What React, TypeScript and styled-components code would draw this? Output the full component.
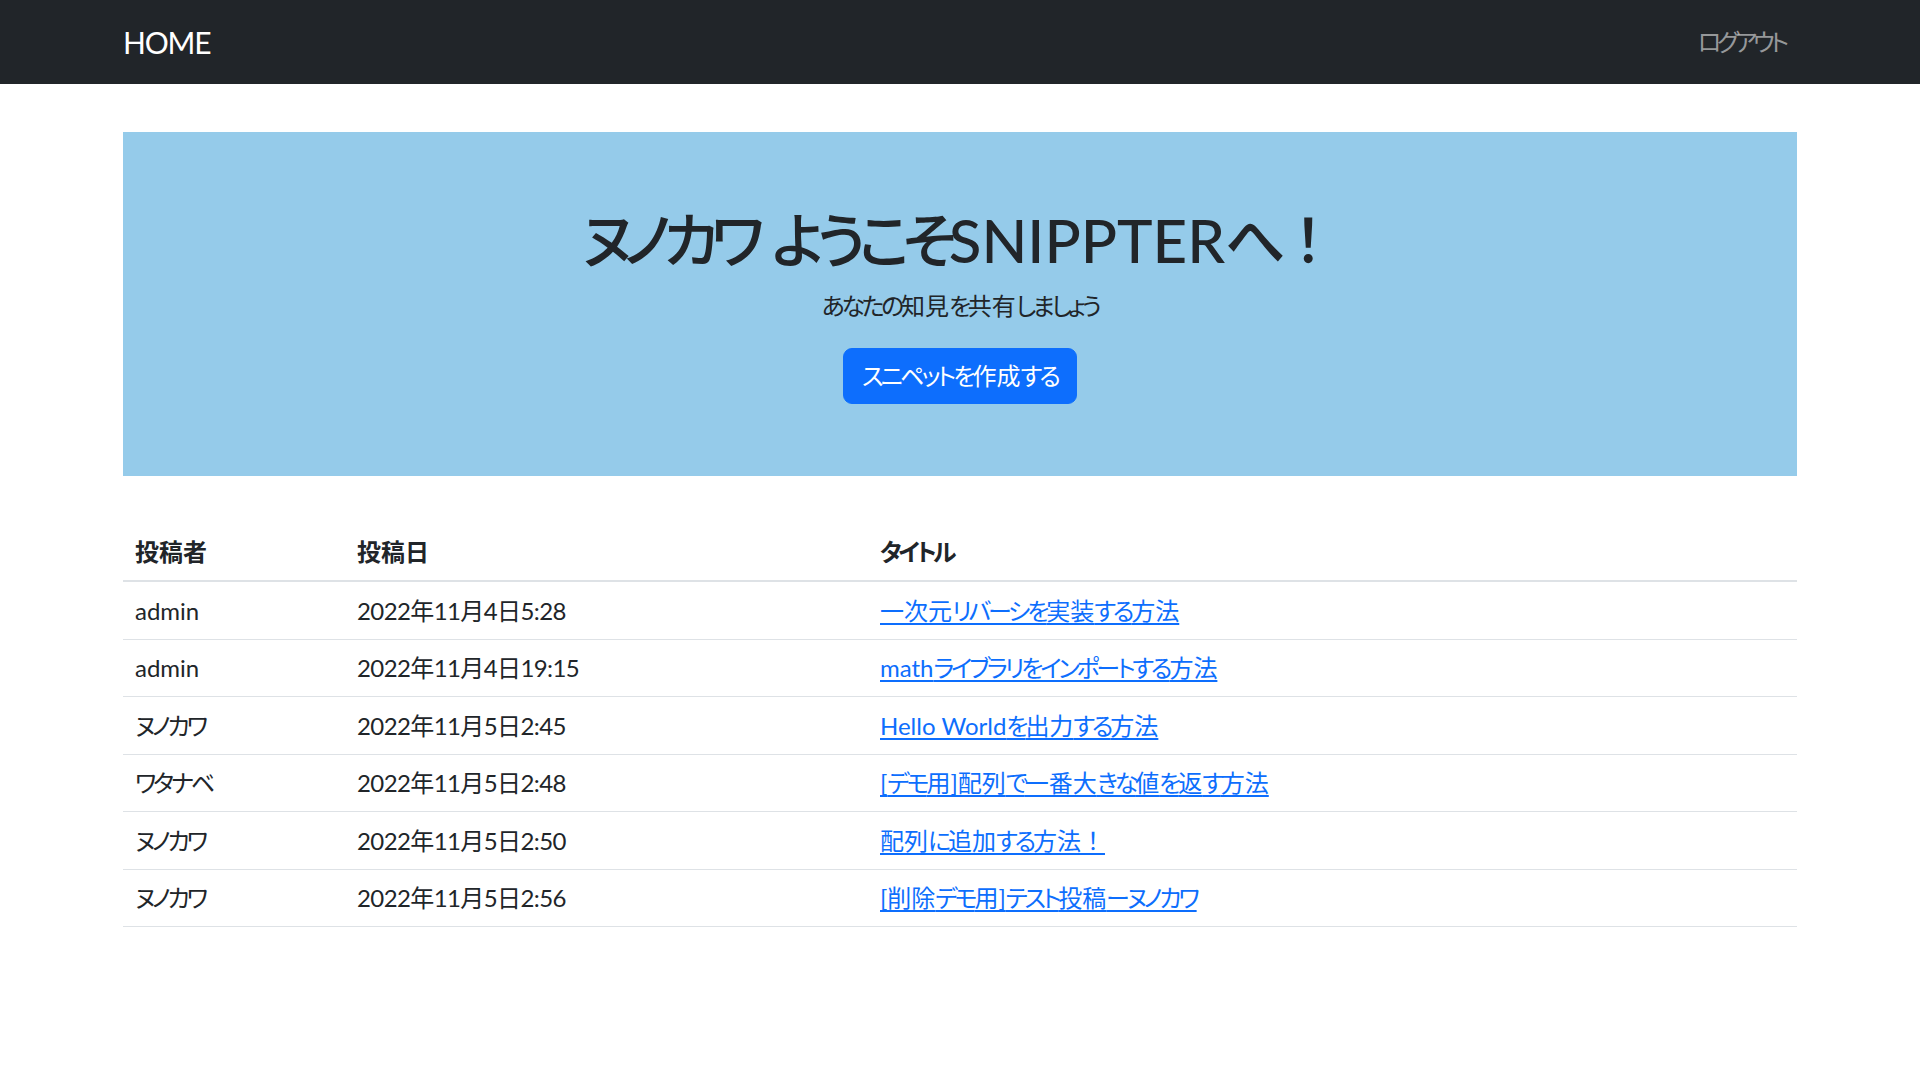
import React from "react";
import styled, { createGlobalStyle } from "styled-components";

const GlobalStyle = createGlobalStyle`
  * { box-sizing: border-box; }
  html, body { margin: 0; padding: 0; background: #ffffff; }
  body {
    font-family: Lato, "Noto Sans CJK JP", sans-serif;
    font-size: 24px;
    line-height: 1.5;
    color: #212529;
    font-feature-settings: "palt";
  }
`;

const Kana = styled.span<{ $tight?: number }>`
  letter-spacing: ${(p) => p.$tight ?? -0.125}em;
`;

const FullPunct = styled.span`
  font-feature-settings: normal;
`;

function Jp({ text, tight }: { text: string; tight?: number }) {
  const parts = text.split(/([\u3041-\u30ff]+|[\uff01])/);
  return (
    <>
      {parts.map((p, i) => {
        if (!p) return null;
        if (/^[\u3041-\u30ff]+$/.test(p)) return <Kana key={i} $tight={tight}>{p}</Kana>;
        if (p === "\uff01") return <FullPunct key={i}>{p}</FullPunct>;
        return <React.Fragment key={i}>{p}</React.Fragment>;
      })}
    </>
  );
}

const Navbar = styled.nav`
  height: 84px;
  background: #212529;
`;

const NavInner = styled.div`
  height: 100%;
  padding: 0 123px;
  display: flex;
  align-items: center;
  justify-content: space-between;
`;

const Brand = styled.a`
  color: #ffffff;
  font-size: 30px;
  line-height: 45px;
  padding: 7.5px 0;
  text-decoration: none;
  letter-spacing: -1.2px;
`;

const NavLink = styled.a`
  color: rgba(255, 255, 255, 0.55);
  font-size: 24px;
  line-height: 36px;
  padding: 12px;
  text-decoration: none;
`;

const Main = styled.main`
  padding: 48px 123px 0;
`;

const Hero = styled.section`
  background: #95cbea;
  padding: 72px 24px;
  text-align: center;
`;

const HeroTitle = styled.h1`
  margin: 0 0 12px;
  font-size: 60px;
  font-weight: 500;
  line-height: 72px;
`;

const HeroLead = styled.p`
  margin: 0 0 24px;
  font-size: 24px;
  line-height: 36px;
`;

const PrimaryButton = styled.a`
  display: inline-block;
  background: #0d6efd;
  color: #ffffff;
  border: 1px solid #0d6efd;
  border-radius: 9px;
  padding: 9px 18px;
  font-size: 24px;
  line-height: 36px;
  text-decoration: none;
`;

const Table = styled.table`
  width: 100%;
  margin-top: 47.5px;
  border-collapse: collapse;
`;

const HeadCell = styled.th<{ $w: number }>`
  width: ${(p) => p.$w}px;
  text-align: left;
  font-weight: 700;
  padding: 10.5px 12px 10px;
  line-height: 36px;
  border-bottom: 2px solid #dee2e6;
`;

const Cell = styled.td`
  padding: 10.5px 12px 10px;
  line-height: 36px;
  border-bottom: 1px solid #dee2e6;
  vertical-align: top;
`;

const DateText = styled.span`
  letter-spacing: -0.6px;
`;

const TitleLink = styled.a`
  color: #0d6efd;
  text-decoration: underline;
  text-underline-offset: 3px;
`;

const rows = [
  { author: "admin", date: "2022年11月4日5:28", title: "一次元リバーシを実装する方法" },
  { author: "admin", date: "2022年11月4日19:15", title: "mathライブラリをインポートする方法" },
  { author: "ヌノカワ", date: "2022年11月5日2:45", title: "Hello Worldを出力する方法" },
  { author: "ワタナベ", date: "2022年11月5日2:48", title: "[デモ用]配列で一番大きな値を返す方法" },
  { author: "ヌノカワ", date: "2022年11月5日2:50", title: "配列に追加する方法！" },
  { author: "ヌノカワ", date: "2022年11月5日2:56", title: "[削除デモ用]テスト投稿ーヌノカワ" },
];

export default function App() {
  return (
    <>
      <GlobalStyle />
      <Navbar>
        <NavInner>
          <Brand href="#">HOME</Brand>
          <NavLink href="#">
            <Jp text="ログアウト" tight={-0.17} />
          </NavLink>
        </NavInner>
      </Navbar>
      <Main>
        <Hero>
          <HeroTitle>
            <Jp text="ヌノカワ ようこそSNIPPTERへ！" tight={-0.13} />
          </HeroTitle>
          <HeroLead>
            <Jp text="あなたの知見を共有しましょう" tight={-0.14} />
          </HeroLead>
          <PrimaryButton href="#">
            <Jp text="スニペットを作成する" tight={-0.12} />
          </PrimaryButton>
        </Hero>
        <Table>
          <thead>
            <tr>
              <HeadCell $w={222}>投稿者</HeadCell>
              <HeadCell $w={523}>投稿日</HeadCell>
              <HeadCell $w={929}>
                <Jp text="タイトル" tight={-0.145} />
              </HeadCell>
            </tr>
          </thead>
          <tbody>
            {rows.map((r, i) => (
              <tr key={i}>
                <Cell>
                  <Jp text={r.author} tight={-0.13} />
                </Cell>
                <Cell>
                  <DateText>{r.date}</DateText>
                </Cell>
                <Cell>
                  <TitleLink href="#">
                    <Jp text={r.title} tight={-0.13} />
                  </TitleLink>
                </Cell>
              </tr>
            ))}
          </tbody>
        </Table>
      </Main>
    </>
  );
}
